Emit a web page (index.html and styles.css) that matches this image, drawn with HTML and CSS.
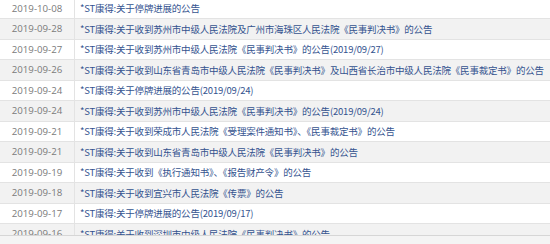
FILE: index.html
```html
<!DOCTYPE html>
<html lang="zh-CN">
<head>
<meta charset="utf-8">
<link rel="stylesheet" href="styles.css">
</head>
<body>
<div class="page">
  <div class="list">
    <div class="row"><div class="date">2019-10-08</div><div class="title">*ST康得:关于停牌进展的公告</div></div>
    <div class="row alt"><div class="date">2019-09-28</div><div class="title">*ST康得:关于收到苏州市中级人民法院及广州市海珠区人民法院《民事判决书》的公告</div></div>
    <div class="row"><div class="date">2019-09-27</div><div class="title">*ST康得:关于收到苏州市中级人民法院《民事判决书》的公告(2019/09/27)</div></div>
    <div class="row alt"><div class="date">2019-09-26</div><div class="title">*ST康得:关于收到山东省青岛市中级人民法院《民事判决书》及山西省长治市中级人民法院《民事裁定书》的公告</div></div>
    <div class="row"><div class="date">2019-09-24</div><div class="title">*ST康得:关于停牌进展的公告(2019/09/24)</div></div>
    <div class="row alt"><div class="date">2019-09-24</div><div class="title">*ST康得:关于收到苏州市中级人民法院《民事判决书》的公告(2019/09/24)</div></div>
    <div class="row"><div class="date">2019-09-21</div><div class="title">*ST康得:关于收到荣成市人民法院《受理案件通知书》、《民事裁定书》的公告</div></div>
    <div class="row alt"><div class="date">2019-09-21</div><div class="title">*ST康得:关于收到山东省青岛市中级人民法院《民事判决书》的公告</div></div>
    <div class="row"><div class="date">2019-09-19</div><div class="title">*ST康得:关于收到《执行通知书》、《报告财产令》的公告</div></div>
    <div class="row alt"><div class="date">2019-09-18</div><div class="title">*ST康得:关于收到宜兴市人民法院《传票》的公告</div></div>
    <div class="row"><div class="date">2019-09-17</div><div class="title">*ST康得:关于停牌进展的公告(2019/09/17)</div></div>
    <div class="row alt"><div class="date">2019-09-16</div><div class="title">*ST康得:关于收到深圳市中级人民法院《民事判决书》的公告</div></div>
  </div>
  <div class="footer"></div>
</div>
</body>
</html>
```
FILE: styles.css
```css
html, body {
  margin: 0;
  padding: 0;
  background: #ffffff;
}
.page {
  width: 550px;
  height: 244px;
  display: flex;
  flex-direction: column;
  overflow: hidden;
}
.list {
  flex: 1;
  overflow: hidden;
  margin-top: -1.5px;
}
.row {
  display: flex;
  height: 19.5px;
  border-bottom: 1px solid #e3e3e3;
  background: #ffffff;
  align-items: center;
}
.row.alt {
  background: #f2f2f2;
}
.date {
  width: 74px;
  flex: none;
  align-self: stretch;
  display: flex;
  align-items: center;
  justify-content: center;
  border-right: 1px solid #e3e3e3;
  font-family: "Open Sans", "Noto Sans", sans-serif;
  font-size: 9.7px;
  color: #7a7a7a;
}
.title {
  padding-left: 5px;
  font-family: "Noto Sans CJK SC", "Noto Sans", sans-serif;
  font-size: 9.5px;
  letter-spacing: -0.2px;
  color: #34538f;
  white-space: nowrap;
}
.footer {
  flex: none;
  height: 8px;
  border-top: 1px solid #d6d6d6;
  background: #f4f4f4;
}
```
